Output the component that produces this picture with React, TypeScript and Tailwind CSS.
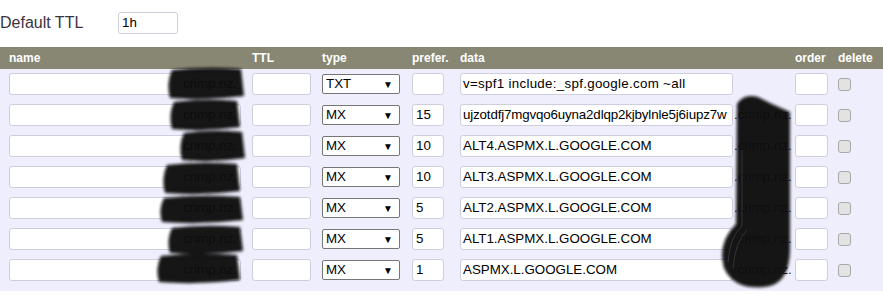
import React from "react";

type Rec = { type: string; pref: string; data: string; track?: string; suffix?: boolean };

const records: Rec[] = [
  { type: "TXT", pref: "", data: "v=spf1 include:_spf.google.com ~all", track: "tracking-[0.3px]" },
  { type: "MX", pref: "15", data: "ujzotdfj7mgvqo6uyna2dlqp2kjbylnle5j6iupz7w", track: "tracking-[-0.15px]", suffix: true },
  { type: "MX", pref: "10", data: "ALT4.ASPMX.L.GOOGLE.COM", suffix: true },
  { type: "MX", pref: "10", data: "ALT3.ASPMX.L.GOOGLE.COM", suffix: true },
  { type: "MX", pref: "5", data: "ALT2.ASPMX.L.GOOGLE.COM", suffix: true },
  { type: "MX", pref: "5", data: "ALT1.ASPMX.L.GOOGLE.COM", suffix: true },
  { type: "MX", pref: "1", data: "ASPMX.L.GOOGLE.COM", suffix: true },
];

const box =
  "h-[22px] rounded-[3px] border border-[#cfcde0] bg-white px-[3px] text-[13.33px] leading-[20px] text-black whitespace-nowrap overflow-hidden";

function Row({ rec }: { rec: Rec }) {
  return (
    <div className="flex h-[31px] pt-[4px] pl-[9px]">
      <div className="w-[243px]">
        <div className={`${box} w-[232px] text-right text-[#222]`}>crimp.nz.</div>
      </div>
      <div className="w-[70px]">
        <div className={`${box} w-[59px]`} />
      </div>
      <div className="w-[90px] pt-[1px]">
        <div className="flex h-[20px] w-[78px] items-center justify-between rounded-[2px] border border-[#767676] bg-white pl-[3px] pr-[6px] text-[13.33px] text-black">
          <span>{rec.type}</span>
          <span className="text-[10px]">▼</span>
        </div>
      </div>
      <div className="w-[48px]">
        <div className={`${box} w-[32px]`}>{rec.pref}</div>
      </div>
      <div className="flex w-[335px]">
        <div className={`${box} w-[273px] shrink-0 !pl-[2px] !pr-[1px] ${rec.track ?? ""}`}>{rec.data}</div>
        {rec.suffix && (
          <span className="pl-[1px] text-[13.33px] leading-[22px] text-[#222]">.crimp.nz.</span>
        )}
      </div>
      <div className="w-[43px]">
        <div className={`${box} w-[33px]`} />
      </div>
      <div className="pt-[5px]">
        <div className="h-[13px] w-[13px] rounded-[3px] border border-[#a8a8a8] bg-[#e3e3e3]" />
      </div>
    </div>
  );
}

const nameBlobs = [
  [168, 67, 244, 100],
  [170, 99, 240, 131],
  [180, 130, 245, 162],
  [163, 162, 240, 195],
  [160, 195, 243, 224],
  [168, 225, 243, 255],
  [157, 253, 240, 284],
];

export default function App() {
  return (
    <div className="relative h-[304px] w-[883px] overflow-hidden bg-white font-['Liberation_Sans',Arial,sans-serif]">
      <div className="flex h-[47px] items-start pt-[12px]">
        <span className="w-[118px] pt-[1px] text-[16px] leading-[20px] text-[#3a3340]">Default TTL</span>
        <div className="h-[22px] w-[60px] rounded-[3px] border border-[#cfcde0] px-[3px] text-[13.33px] leading-[20px] text-black">
          1h
        </div>
      </div>

      <div className="flex h-[22px] items-center bg-[#878774] pl-[9px] text-[12px] font-bold text-white">
        <span className="w-[243px]">name</span>
        <span className="w-[70px]">TTL</span>
        <span className="w-[90px]">type</span>
        <span className="w-[48px]">prefer.</span>
        <span className="w-[335px]">data</span>
        <span className="w-[43px]">order</span>
        <span>delete</span>
      </div>

      <div className="bg-[#eeeefc] pb-[5px]">
        {records.map((r, i) => (
          <Row key={i} rec={r} />
        ))}
      </div>

      <svg className="pointer-events-none absolute inset-0" width="883" height="304">
        <defs>
          <filter id="smudge" x="-20%" y="-20%" width="140%" height="140%">
            <feGaussianBlur stdDeviation="1.4" />
          </filter>
        </defs>
        <g filter="url(#smudge)" fill="#0b0b0b" opacity="0.96">
          {nameBlobs.map(([x1, y1, x2, y2], i) => (
            <path
              key={i}
              d={`M${x1 + 4},${y1 + 3} Q${(x1 + x2) / 2},${y1 - 1} ${x2 - 3},${y1 + 2} L${x2},${y2 - 4} Q${(x1 + x2) / 2},${y2 + 1} ${x1 + 2},${y2 - 2} Q${x1 - 2},${(y1 + y2) / 2} ${x1 + 4},${y1 + 3} Z`}
            />
          ))}
          <path d="M737,104 Q744,93 758,97 L772,104 L790,112 L790,245 Q791,285 764,287 Q734,290 724,268 Q717,243 736,224 Z" />
        </g>
        <g fill="none" stroke="#4a4a4a" strokeWidth="1" opacity="0.6">
          <path d="M728,262 Q730,236 742,226 L742,150" />
          <path d="M733,268 Q735,242 747,230" />
        </g>
      </svg>
    </div>
  );
}
